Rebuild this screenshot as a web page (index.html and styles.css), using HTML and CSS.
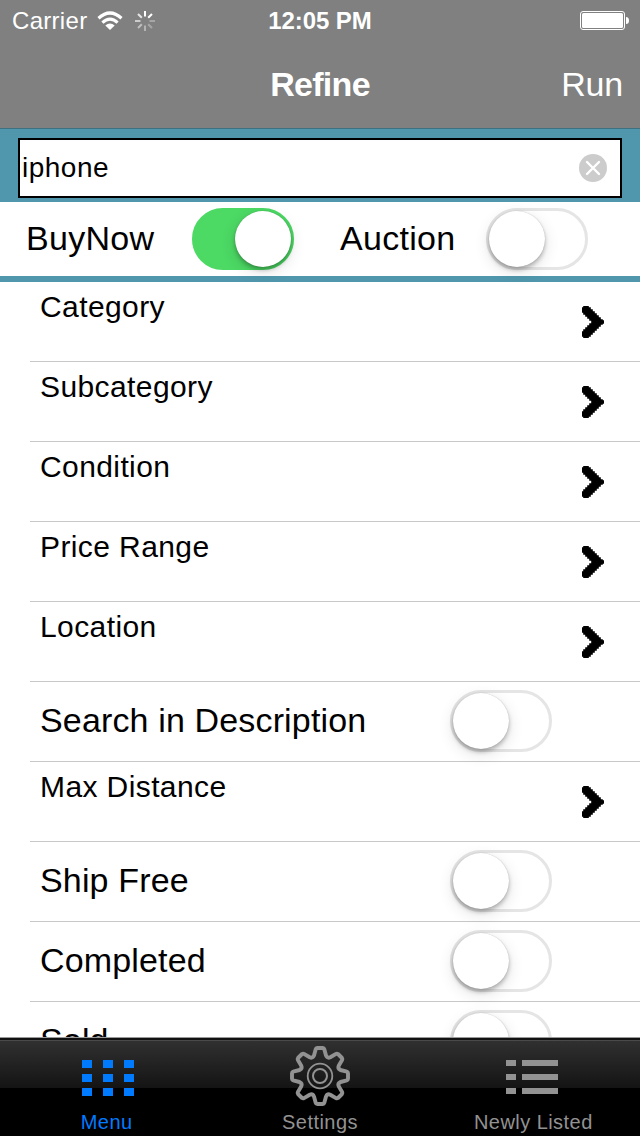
FILE: index.html
```html
<!DOCTYPE html>
<html lang="en">
<head>
    <meta charset="UTF-8">
    <meta name="viewport" content="width=device-width, initial-scale=1.0">
    <title>Refine</title>
    <link rel="stylesheet" href="styles.css">
</head>
<body>
    <!-- shared icons -->
    <svg class="hidden">
        <symbol id="chevron" viewBox="0 0 22 32">
            <path d="M2 0H6V2H8V4H10V6H12V8H14V10H16V12H18V14H20V15H22V17H20V18H18V20H16V22H14V24H12V26H10V28H8V30H6V32H2V30H0V26H2V24H4V22H6V20H8V18H10V14H8V12H6V10H4V8H2V6H0V2H2Z" stroke="#000" stroke-width="1.600"/>
        </symbol>
    </svg>

    <header class="header">
        <div class="status-bar">
            <div class="status-left">
                <span>Carrier</span>
                <svg class="wifi" width="26" height="20" viewBox="0 0 26 20">
                    <path d="M1.500 7.200Q13 -3.200 24.500 7.200M5.400 11.600Q13 4.800 20.600 11.600" fill="none" stroke="#fff" stroke-width="3.200"/>
                    <path d="M8.300 14.500Q13 10.500 17.700 14.500L13 19Z" fill="#fff"/>
                </svg>
                <svg class="spinner" width="20" height="20" viewBox="-10 -10 20 20" stroke="#fff" stroke-width="2">
                    <path d="M0 -4.500V-10M3.200 -3.200L7 -7"/>
                    <path d="M4.500 0H10" opacity=".3"/>
                    <path d="M3.200 3.200L7 7" opacity=".3"/>
                    <path d="M0 4.500V10" opacity=".4"/>
                    <path d="M-3.200 3.200L-7 7" opacity=".5"/>
                    <path d="M-4.500 0H-10" opacity=".6"/>
                    <path d="M-3.200 -3.200L-7 -7" opacity=".8"/>
                </svg>
            </div>
            <strong class="time">12:05 PM</strong>
            <svg class="battery" width="50" height="20" viewBox="0 0 50 20">
                <rect x=".5" y=".5" width="44" height="18" rx="2.500" fill="none" stroke="#fff"/>
                <rect x="2" y="2" width="41" height="15" rx="1.500" fill="#fff"/>
                <path d="M46 6Q49 6 49 9.500T46 13Z" fill="#fff"/>
            </svg>
        </div>
        <div class="nav-bar">
            <h1>Refine</h1>
            <button class="run">Run</button>
        </div>
    </header>

    <div class="search">
        <div class="search-box">
            <span>iphone</span>
            <svg width="28" height="28" viewBox="0 0 28 28">
                <circle cx="14" cy="14" r="14" fill="#ccc"/>
                <path d="M8 8L20 20M20 8L8 20" stroke="#fff" stroke-width="2.400" stroke-linecap="round"/>
            </svg>
        </div>
    </div>

    <div class="types">
        <span class="buy-label">BuyNow</span>
        <span class="switch on"></span>
        <span class="auction-label">Auction</span>
        <span class="switch"></span>
    </div>

    <main class="list">
        <div class="row"><span>Category</span><svg class="chevron"><use href="#chevron"/></svg></div>
        <div class="row"><span>Subcategory</span><svg class="chevron"><use href="#chevron"/></svg></div>
        <div class="row"><span>Condition</span><svg class="chevron"><use href="#chevron"/></svg></div>
        <div class="row"><span>Price Range</span><svg class="chevron"><use href="#chevron"/></svg></div>
        <div class="row"><span>Location</span><svg class="chevron"><use href="#chevron"/></svg></div>
        <div class="row toggle"><span>Search in Description</span><span class="switch"></span></div>
        <div class="row"><span>Max Distance</span><svg class="chevron"><use href="#chevron"/></svg></div>
        <div class="row toggle"><span>Ship Free</span><span class="switch"></span></div>
        <div class="row toggle"><span>Completed</span><span class="switch"></span></div>
        <div class="row toggle"><span>Sold</span><span class="switch"></span></div>
    </main>

    <nav class="tab-bar">
        <a class="tab active">
            <svg width="60" height="60" viewBox="1 0 60 60" fill="currentColor">
                <path d="M6 14h10v8H6zM27 14h10v8H27zM48 14h10v8H48zM6 28h10v8H6zM27 28h10v8H27zM48 28h10v8H48zM6 42h10v8H6zM27 42h10v8H27zM48 42h10v8H48z"/>
            </svg>
            <span>Menu</span>
        </a>
        <a class="tab">
            <svg width="60" height="60" viewBox="-30 -30 60 60" fill="none" stroke="currentColor" stroke-linejoin="round">
                <path stroke-width="3.900" d="M-6 -20.500L-4.300 -26.800Q-4 -28 -2.800 -28H2.800Q4 -28 4.300 -26.800L6 -20.500Q7.500 -17.500 10.250 -18.700L16 -22.100Q17 -22.700 18 -22L22 -18Q22.700 -17 22.100 -16L18.700 -10.250Q17.500 -7.500 20.500 -6L26.800 -4.300Q28 -4 28 -2.800V2.800Q28 4 26.800 4.300L20.500 6Q17.500 7.500 18.700 10.250L22.100 16Q22.700 17 22 18L18 22Q17 22.700 16 22.100L10.250 18.700Q7.500 17.500 6 20.500L4.300 26.800Q4 28 2.800 28H-2.800Q-4 28 -4.300 26.800L-6 20.500Q-7.500 17.500 -10.250 18.700L-16 22.100Q-17 22.700 -18 22L-22 18Q-22.700 17 -22.100 16L-18.700 10.250Q-17.500 7.500 -20.500 6L-26.800 4.300Q-28 4 -28 2.800V-2.800Q-28 -4 -26.800 -4.300L-20.500 -6Q-17.500 -7.500 -18.700 -10.250L-22.100 -16Q-22.700 -17 -22 -18L-18 -22Q-17 -22.700 -16 -22.100L-10.250 -18.700Q-7.500 -17.500 -6 -20.500Z"/>
                <circle r="12.300" stroke-width="1.800"/>
                <circle r="7" stroke-width="2"/>
            </svg>
            <span>Settings</span>
        </a>
        <a class="tab">
            <svg width="60" height="60" viewBox="1 0 60 60" fill="currentColor">
                <path d="M4 14h10v6H4zM20 14h36v6H20zM4 28h10v6H4zM20 28h36v6H20zM4 42h10v6H4zM20 42h36v6H20z"/>
            </svg>
            <span>Newly Listed</span>
        </a>
    </nav>
</body>
</html>
```
FILE: styles.css
```css
* {
    box-sizing: border-box;
}
body {
    font-family: "Liberation Sans", Arial, sans-serif;
    margin: 0;
    height: 1136px;
    display: flex;
    flex-direction: column;
    overflow: hidden;
    background: #fff;
    color: #000;
}
.hidden {
    display: none;
}
.header {
    height: 128px;
    background: #808080;
    color: #fff;
}
.status-bar {
    height: 40px;
    padding: 2px 10px 0 12px;
    display: grid;
    grid-template-columns: 1fr auto 1fr;
    align-items: center;
    font-size: 24px;
    letter-spacing: 0.3px;
}
.status-left {
    display: flex;
    align-items: center;
}
.wifi {
    margin-left: 10px;
}
.spinner {
    margin-left: 12px;
}
.time {
    margin-right: 2px;
    letter-spacing: -0.1px;
}
.battery {
    justify-self: end;
}
.nav-bar {
    height: 88px;
    padding: 0 17px;
    display: grid;
    grid-template-columns: 1fr auto 1fr;
    align-items: center;
}
.nav-bar h1 {
    grid-column: 2;
    margin: 0;
    font-size: 34px;
    letter-spacing: -0.7px;
}
.run {
    justify-self: end;
    padding: 0;
    border: none;
    background: none;
    color: #fff;
    font: 34px "Liberation Sans", Arial, sans-serif;
    letter-spacing: -0.2px;
}
.search {
    height: 74px;
    padding: 9px 18px 4px;
    background: #5097ad;
    border-top: 1px solid #3c7182;
}
.search-box {
    height: 60px;
    padding: 0 13px 0 2px;
    display: flex;
    align-items: center;
    justify-content: space-between;
    background: #fff;
    border: 2px solid #000;
    font-size: 28px;
    letter-spacing: 0.5px;
}
.types {
    height: 80px;
    display: flex;
    align-items: center;
    padding-left: 26px;
    border-bottom: 6px solid #5097ad;
    font-size: 34px;
    letter-spacing: 0.3px;
}
.buy-label {
    width: 166px;
    padding-bottom: 2px;
}
.auction-label {
    width: 146px;
    margin-left: 46px;
    padding-bottom: 2px;
}
.switch {
    width: 102px;
    height: 62px;
    border: 3px solid #e5e5e5;
    border-radius: 31px;
    display: flex;
}
.switch::before {
    content: "";
    width: 56px;
    height: 56px;
    border-radius: 50%;
    background: #fff;
    box-shadow: 0 0 1px rgba(0, 0, 0, 0.25), 0 3px 4px rgba(0, 0, 0, 0.25), 0 5px 16px rgba(0, 0, 0, 0.12);
}
.switch.on {
    background: #4cd964;
    border-color: #4cd964;
    justify-content: flex-end;
}
.list {
    flex: 1;
    min-height: 0;
    overflow: hidden;
}
.row {
    height: 80px;
    margin-left: 30px;
    padding: 8px 36px 0 10px;
    border-bottom: 1px solid #c8c8c8;
    display: flex;
    justify-content: space-between;
    font-size: 30px;
    letter-spacing: 0.4px;
}
.chevron {
    width: 22px;
    height: 32px;
    margin-top: 16px;
}
.row.toggle {
    padding: 0 88px 2px 10px;
    align-items: center;
    font-size: 34px;
    letter-spacing: 0.15px;
}
.tab-bar {
    height: 99px;
    display: flex;
    border-top: 1px solid #999;
    background: linear-gradient(#111 2px, #4a4a4a 2px, #4a4a4a 3px, #303030 3px, #141414 50px, #000 50px);
}
.tab {
    flex: 1;
    padding-top: 8px;
    display: flex;
    flex-direction: column;
    align-items: center;
    color: #929292;
    font-size: 20px;
    letter-spacing: 0.45px;
}
.tab span {
    margin-top: 5px;
}
.tab.active {
    color: #007aff;
}
```
